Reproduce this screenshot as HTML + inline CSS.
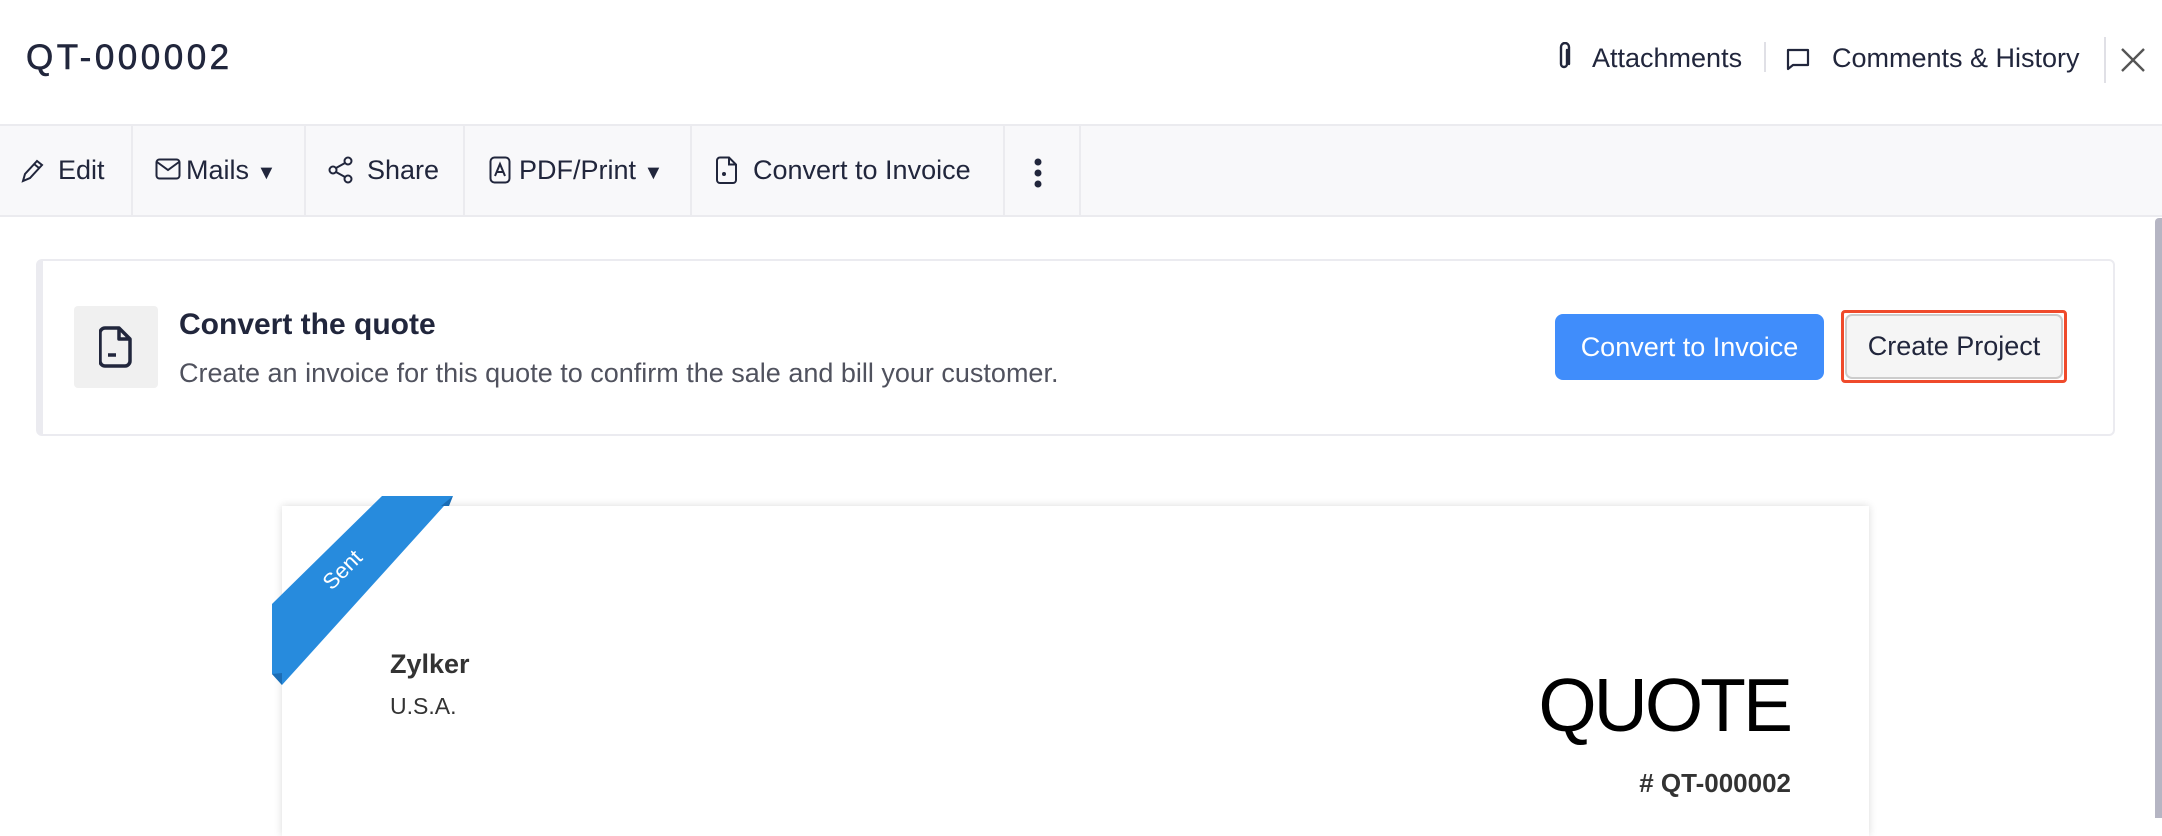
<!DOCTYPE html>
<html><head><meta charset="utf-8"><style>
*{margin:0;padding:0;box-sizing:border-box}
body{width:2162px;height:818px;overflow:hidden;background:#fff;font-family:"Liberation Sans",sans-serif;color:#21263c;position:relative}
.a{position:absolute;white-space:nowrap}
.tb{position:absolute;top:124px;left:0;width:2162px;height:93px;background:#f8f8fa;border-top:2px solid #ebebef;border-bottom:2px solid #ebebef}
.sep{position:absolute;top:0;width:2px;height:89px;background:#ebebef}
.ti{position:absolute;top:0;height:89px;line-height:89px;font-size:27px;color:#21263c;white-space:nowrap}
</style></head><body>
<div class="a" style="left:26px;top:38px;font-size:35px;line-height:40px;color:#21263c;-webkit-text-stroke:0.6px #21263c;letter-spacing:3.5px">QT-000002</div>

<svg class="a" style="left:1558px;top:42px" width="14" height="30" viewBox="0 0 14 30" fill="none" stroke="#21263c" stroke-width="2.4" stroke-linecap="round"><path d="M9 8v14a3 3 0 0 1-6 0V5a4 4 0 0 1 8 0v17"/></svg>
<div class="a" style="left:1592px;top:42px;font-size:27px;line-height:32px">Attachments</div>
<div class="a" style="left:1764px;top:42px;width:2px;height:30px;background:#e0e0e6"></div>
<svg class="a" style="left:1785px;top:46px" width="26" height="26" viewBox="0 0 26 26" fill="none" stroke="#21263c" stroke-width="2.2" stroke-linejoin="round"><path d="M3 4h20v15H8l-5 4z"/></svg>
<div class="a" style="left:1832px;top:42px;font-size:27px;line-height:32px">Comments &amp; History</div>
<div class="a" style="left:2104px;top:37px;width:2px;height:46px;background:#e0e0e6"></div>
<svg class="a" style="left:2120px;top:47px" width="26" height="26" viewBox="0 0 26 26" stroke="#555" stroke-width="2.4"><path d="M2 2l22 22M24 2L2 24"/></svg>

<div class="tb">
 <svg class="a" style="left:20px;top:32px" width="24" height="26" viewBox="0 0 24 26" fill="none" stroke="#21263c" stroke-width="2"><path d="M3 23l2-7L17 3l5 4-12 13z M14 6l5 4"/></svg>
 <div class="ti" style="left:58px">Edit</div>
 <div class="sep" style="left:131px"></div>
 <svg class="a" style="left:155px;top:32px" width="26" height="22" viewBox="0 0 26 22" fill="none" stroke="#21263c" stroke-width="2"><rect x="1.5" y="1.5" width="23" height="19" rx="3"/><path d="M2 4l11 8 11-8"/></svg>
 <div class="ti" style="left:186px">Mails <span style="font-size:20px">▼</span></div>
 <div class="sep" style="left:304px"></div>
 <svg class="a" style="left:328px;top:30px" width="26" height="28" viewBox="0 0 26 28" fill="none" stroke="#21263c" stroke-width="2"><circle cx="5" cy="14" r="3.5"/><circle cx="20" cy="5" r="3.5"/><circle cx="20" cy="23" r="3.5"/><path d="M8 12l9-5M8 16l9 5"/></svg>
 <div class="ti" style="left:367px">Share</div>
 <div class="sep" style="left:463px"></div>
 <svg class="a" style="left:489px;top:30px" width="22" height="28" viewBox="0 0 22 28" fill="none" stroke="#21263c" stroke-width="2"><rect x="1.5" y="1.5" width="19" height="25" rx="4"/><path d="M6 20l5-12 5 12M7 16h8"/></svg>
 <div class="ti" style="left:519px">PDF/Print <span style="font-size:20px">▼</span></div>
 <div class="sep" style="left:690px"></div>
 <svg class="a" style="left:716px;top:30px" width="22" height="28" viewBox="0 0 22 28" fill="none" stroke="#21263c" stroke-width="2"><path d="M4 1.5h9l7 7V24a3 3 0 0 1-3 3H4a3 3 0 0 1-3-3V4.5a3 3 0 0 1 3-3z M13 1.5v7h7"/><circle cx="8" cy="18" r="1" fill="#21263c"/></svg>
 <div class="ti" style="left:753px">Convert to Invoice</div>
 <div class="sep" style="left:1003px"></div>
 <svg class="a" style="left:1034px;top:32px" width="8" height="30" viewBox="0 0 8 30" fill="#21263c"><circle cx="4" cy="4" r="3.5"/><circle cx="4" cy="15" r="3.5"/><circle cx="4" cy="26" r="3.5"/></svg>
 <div class="sep" style="left:1079px"></div>
</div>
<div class="a" style="left:2155px;top:218px;width:7px;height:600px;background:#b5b5c3;border-radius:4px 0 0 0"></div>

<div class="a" style="left:36px;top:259px;width:2079px;height:177px;border:2px solid #ebebf0;border-left:7px solid #ebebf0;border-radius:6px;background:#fff"></div>
<div class="a" style="left:74px;top:306px;width:84px;height:82px;background:#f0f0f0;border-radius:4px"></div>
<svg class="a" style="left:99px;top:326px" width="34" height="42" viewBox="0 0 34 42" fill="none" stroke="#21263c" stroke-width="3.5" stroke-linejoin="round"><path d="M6 2h14l11 11v22a5 5 0 0 1-5 5H6a5 5 0 0 1-5-5V7a5 5 0 0 1 5-5z M20 2v11h11"/><path d="M9 29h8"/></svg>
<div class="a" style="left:179px;top:307px;font-size:30px;line-height:36px;font-weight:bold;color:#21263c">Convert the quote</div>
<div class="a" style="left:179px;top:357px;font-size:27px;line-height:32px;color:#50525e">Create an invoice for this quote to confirm the sale and bill your customer.</div>
<div class="a" style="left:1555px;top:314px;width:269px;height:66px;background:#408dfb;border-radius:8px;color:#fff;font-size:27px;line-height:66px;text-align:center">Convert to Invoice</div>
<div class="a" style="left:1841px;top:310px;width:226px;height:73px;border:3px solid #ef4a2b;border-radius:4px"></div>
<div class="a" style="left:1845px;top:314px;width:218px;height:65px;background:#f5f5f5;border:2px solid #ccc;border-radius:7px;font-size:27px;line-height:61px;text-align:center;color:#21263c">Create Project</div>

<div class="a" style="left:282px;top:506px;width:1587px;height:330px;background:#fff;box-shadow:0 0 8px rgba(0,0,0,.15)"></div>
<svg class="a" style="left:270px;top:494px" width="200" height="200" viewBox="0 0 200 200"><path d="M112 2h71L12 191 2 180V110z" fill="#278bdd"/><path d="M183 2l-4 10h-8z" fill="#1b6db5"/><path d="M2 180l10 11v-12z" fill="#1b6db5"/></svg>
<div class="a" style="left:320px;top:558px;font-size:22px;line-height:24px;color:#fff;transform:rotate(-45deg);transform-origin:center">Sent</div>
<div class="a" style="left:390px;top:648px;font-size:27px;line-height:32px;font-weight:bold;color:#333">Zylker</div>
<div class="a" style="left:390px;top:692px;font-size:23px;line-height:28px;color:#333">U.S.A.</div>
<div class="a" style="left:1500px;width:290px;top:660px;font-size:75px;line-height:90px;text-align:right;color:#000;letter-spacing:-3px">QUOTE</div>
<div class="a" style="left:1500px;width:291px;top:768px;font-size:26px;line-height:30px;font-weight:bold;text-align:right;color:#333">#&nbsp;QT-000002</div>
</body></html>
